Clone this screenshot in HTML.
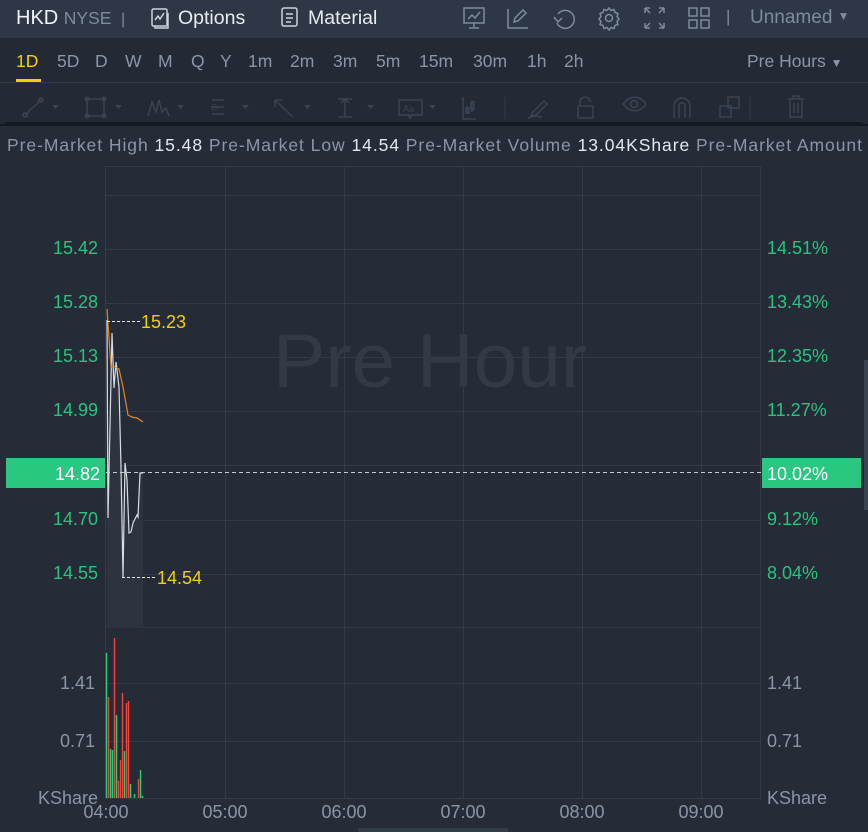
<!DOCTYPE html>
<html><head><meta charset="utf-8"><style>
*{margin:0;padding:0;box-sizing:border-box}
body{width:868px;height:832px;background:#252c37;font-family:"Liberation Sans",sans-serif;overflow:hidden;position:relative}
.top{position:absolute;left:0;top:0;width:868px;height:38px;background:#2d3746}
.bar2{position:absolute;left:0;top:38px;width:868px;height:88px;background:#232a35;border-bottom:2px solid #151a21}
.t{position:absolute;white-space:nowrap}
.tf span{position:absolute;top:51px;font-size:17.5px;color:#8a96a8}
.info{position:absolute;left:7px;top:135px;font-size:17.5px;color:#8a96a8;white-space:nowrap;letter-spacing:0.95px}
.info b{font-weight:normal;color:#e3e8ef}
.lab{position:absolute;font-size:18px;color:#27c47f}
.l{width:60px;text-align:right}
.vl{position:absolute;font-size:18px;color:#8a96a8}
.tm{width:80px;text-align:center}
</style></head><body>
<div class="top"></div>
<div class="t" style="left:16px;top:7px;font-size:20px;color:#f1f4f8">HKD <span style="font-size:17.5px;color:#7f8a9b">NYSE</span> <span style="color:#7f8a9b;font-size:16px;margin-left:4px">|</span></div>
<svg class="t" style="left:149px;top:7px" width="22" height="22" viewBox="0 0 22 22" fill="none" stroke="#cdd3dc" stroke-width="1.5"><rect x="3" y="2" width="15" height="17" rx="1.5"/><path d="M6 13l3-4 2 3 4-6"/><path d="M6 19v2h13V6"/></svg>
<div class="t" style="left:178px;top:7px;font-size:19.5px;color:#e8ecf1">Options</div>
<svg class="t" style="left:280px;top:6px" width="20" height="22" viewBox="0 0 20 22" fill="none" stroke="#cdd3dc" stroke-width="1.5"><rect x="2" y="2" width="15" height="18" rx="2"/><path d="M6 8h7M6 12h7M6 16h5"/></svg>
<div class="t" style="left:308px;top:7px;font-size:19.5px;color:#e8ecf1">Material</div>
<svg class="t" style="left:462px;top:5px" width="250" height="26" viewBox="0 0 250 26" fill="none" stroke="#7f8a9b" stroke-width="1.5">
<rect x="2" y="3" width="20" height="15"/><path d="M6 14l4-4 3 3 5-6M12 18v4M7 23h10"/>
<path d="M46 4v19h20M52 17l1-4 8-8 3 3-8 8z"/>
<path d="M96 9a9 9 0 1 1-1 9M92 12l4 5 4-4"/>
<circle cx="147" cy="13" r="3.5"/><path d="M147 3l2 2.5 3-1 1 3 3 1-1 3 2 2.5-2 2.5 1 3-3 1-1 3-3-1-2 2.5-2-2.5-3 1-1-3-3-1 1-3-2-2.5 2-2.5-1-3 3-1 1-3 3 1z"/>
<path d="M183 3h5M183 3v5M183 3l5 5M202 3h-5M202 3v5M202 3l-5 5M183 23h5M183 23v-5M183 23l5-5M202 23h-5M202 23v-5M202 23l-5-5"/>
<rect x="227" y="3" width="8" height="8"/><rect x="239" y="3" width="8" height="8"/><rect x="227" y="15" width="8" height="8"/><rect x="239" y="15" width="8" height="8"/>
</svg>
<div class="t" style="left:726px;top:7px;font-size:17px;color:#7f8a9b">|</div>
<div class="t" style="left:750px;top:7px;font-size:19px;color:#7f8a9b">Unnamed <span style="font-size:12px;position:relative;top:-3px">▼</span></div>

<div class="bar2"></div>
<div class="tf">
<span style="left:16px;color:#f4d000">1D</span><span style="left:57px">5D</span><span style="left:95px">D</span><span style="left:125px">W</span><span style="left:158px">M</span><span style="left:191px">Q</span><span style="left:220px">Y</span><span style="left:248px">1m</span><span style="left:290px">2m</span><span style="left:333px">3m</span><span style="left:376px">5m</span><span style="left:419px">15m</span><span style="left:473px">30m</span><span style="left:527px">1h</span><span style="left:564px">2h</span>
<span style="left:747px">Pre Hours <span style="position:static;font-size:12px">▼</span></span>
</div>
<div class="t" style="left:16px;top:79px;width:25px;height:3px;background:#f4d000"></div>
<div class="t" style="left:0;top:82px;width:868px;height:1px;background:#323b49"></div>
<svg class="t" style="left:0;top:84px" width="868" height="42" viewBox="0 0 868 42" fill="none" stroke="#3b4452" stroke-width="1.5">
<path d="M25 31l16-15"/><circle cx="25" cy="31" r="2"/><circle cx="41" cy="16" r="2"/>
<rect x="87" y="15" width="17" height="17"/><circle cx="87" cy="15" r="1.8"/><circle cx="104" cy="15" r="1.8"/><circle cx="87" cy="32" r="1.8"/><circle cx="104" cy="32" r="1.8"/>
<path d="M148 32l4-14 4 10 3-12 3 12 4-4 3 8"/>
<path d="M212 16h12M212 23h12M212 30h12"/><text x="211" y="26" font-size="8" fill="#3b4452" stroke="none">G</text>
<path d="M275 16l18 17M275 16v7M275 16h7"/>
<path d="M338 15h14M338 33h14M345 15v18M341 19l4-4 4 4"/>
<rect x="399" y="16" width="23" height="15"/><path d="M408 31l2 3 2-3"/><text x="403" y="28" font-size="9" fill="#3b4452" stroke="none">Aa</text>
<path d="M463 13v22h13M467 22v8M472 16v12M466 24h3v5h-3zM471 18h3v7h-3z"/>
<path d="M528 34c3 0 4-3 7-3s3 3 7 2M532 29l12-12 3 3-12 12-4 1z"/>
<rect x="578" y="22" width="15" height="12" rx="1"/><path d="M580 22v-4a5 5 0 0 1 10 0"/>
<path d="M623 20c7-9 17-9 23 0-6 9-16 9-23 0z"/><circle cx="634" cy="20" r="3.5"/>
<path d="M674 34v-12a8 8 0 0 1 16 0v12M679 34v-12a3 3 0 0 1 6 0v12"/>
<rect x="720" y="22" width="11" height="11"/><rect x="728" y="13" width="11" height="11"/>
<path d="M788 15h16M793 15v-3h6v3M790 15v18h12V15M794 19v10M798 19v10"/>
<path d="M505 13v22M750 13v22" stroke="#2e3642"/>
<g fill="#3b4452" stroke="none"><path d="M52 21h7l-3.5 4zM115 21h7l-3.5 4zM177 21h7l-3.5 4zM242 21h7l-3.5 4zM304 21h7l-3.5 4zM367 21h7l-3.5 4zM429 21h7l-3.5 4z"/></g>
</svg>
<div class="t" style="left:5px;top:122px;width:858px;height:3px;background:#151a21"></div>

<div class="info">Pre-Market High <b>15.48</b> Pre-Market Low <b>14.54</b> Pre-Market Volume <b>13.04KShare</b> Pre-Market Amount</div>

<svg class="t" style="left:0;top:0" width="868" height="832" viewBox="0 0 868 832">
<g stroke="#323b47" stroke-width="1" fill="none">
<rect x="105.5" y="166.5" width="655" height="632"/>
<path d="M225.5 166v632M344.5 166v632M463.5 166v632M582.5 166v632M701.5 166v632"/>
<path d="M106 195.5h654M106 249.5h654M106 303.5h654M106 357.5h654M106 411.5h654M106 465.5h654M106 520.5h654M106 574.5h654M106 627.5h654M106 683.5h654M106 741.5h654"/>
</g>
<text x="430" y="387" font-size="76" fill="#323a46" text-anchor="middle" font-family="Liberation Sans" textLength="314" lengthAdjust="spacingAndGlyphs">Pre Hour</text>
<path d="M107 320L108 518L112 333L114 388L116 362L119 387L121 467L123 577L125 463L127 480L129 533L131 532L133 523L137 515L138 517L140 473L143 473L143 628L107 628Z" fill="#2d3440"/>
<path d="M107 320L108 518L112 333L114 388L116 362L119 387L121 467L123 577L125 463L127 480L129 533L131 532L133 523L137 515L138 517L140 473L143 473" fill="none" stroke="#d8dde3" stroke-width="1.2"/>
<path d="M107 309L111 367L115 367L119 369L123 387L128 415L132 417L137 418L143 422" fill="none" stroke="#e3891d" stroke-width="1.2"/>
<path d="M107 321.5h34M122 577.5h34" stroke="#e8e8e8" stroke-width="1" stroke-dasharray="3,2"/>
<text x="141" y="328" font-size="18" fill="#f4d000">15.23</text>
<text x="157" y="584" font-size="18" fill="#f4d000">14.54</text>
<path d="M106 472.5h655" stroke="#c8ccd2" stroke-width="1" stroke-dasharray="4,3"/>
<rect x="6" y="458" width="99" height="30" fill="#28c880"/>
<rect x="762" y="458" width="99" height="30" fill="#28c880"/>
<text x="100" y="480" font-size="18" fill="#fff" text-anchor="end">14.82</text>
<text x="767" y="480" font-size="18" fill="#fff">10.02%</text>
<g fill="#1fd07f">
<rect x="105.8" y="653" width="1.4" height="145"/><rect x="109.8" y="749" width="1.4" height="49"/><rect x="111.8" y="750" width="1.4" height="48"/><rect x="115.8" y="715" width="1.4" height="83"/><rect x="123.8" y="751" width="1.4" height="47"/><rect x="129.8" y="784" width="1.4" height="14"/><rect x="133.8" y="794" width="1.4" height="4"/><rect x="139.8" y="770" width="1.4" height="28"/><rect x="141.8" y="796" width="1.4" height="2"/>
</g>
<g fill="#f0443c">
<rect x="107.8" y="697" width="1.4" height="101"/><rect x="113.8" y="638" width="1.4" height="160"/><rect x="117.8" y="781" width="1.4" height="17"/><rect x="119.8" y="760" width="1.4" height="38"/><rect x="121.8" y="693" width="1.4" height="105"/><rect x="125.8" y="703" width="1.4" height="95"/><rect x="127.8" y="701" width="1.4" height="97"/><rect x="137.8" y="779" width="1.4" height="19"/>
</g>
<rect x="864" y="360" width="4" height="150" fill="#3a4350"/>
<rect x="358" y="828" width="150" height="4" fill="#333c49"/>
</svg>

<div class="lab l" style="left:38px;top:238px">15.42</div>
<div class="lab l" style="left:38px;top:292px">15.28</div>
<div class="lab l" style="left:38px;top:346px">15.13</div>
<div class="lab l" style="left:38px;top:400px">14.99</div>
<div class="lab l" style="left:38px;top:509px">14.70</div>
<div class="lab l" style="left:38px;top:563px">14.55</div>
<div class="lab" style="left:767px;top:238px">14.51%</div>
<div class="lab" style="left:767px;top:292px">13.43%</div>
<div class="lab" style="left:767px;top:346px">12.35%</div>
<div class="lab" style="left:767px;top:400px">11.27%</div>
<div class="lab" style="left:767px;top:509px">9.12%</div>
<div class="lab" style="left:767px;top:563px">8.04%</div>
<div class="vl l" style="left:35px;top:673px">1.41</div>
<div class="vl l" style="left:35px;top:731px">0.71</div>
<div class="vl" style="left:38px;top:788px">KShare</div>
<div class="vl" style="left:767px;top:673px">1.41</div>
<div class="vl" style="left:767px;top:731px">0.71</div>
<div class="vl" style="left:767px;top:788px">KShare</div>
<div class="vl tm" style="left:66px;top:802px">04:00</div>
<div class="vl tm" style="left:185px;top:802px">05:00</div>
<div class="vl tm" style="left:304px;top:802px">06:00</div>
<div class="vl tm" style="left:423px;top:802px">07:00</div>
<div class="vl tm" style="left:542px;top:802px">08:00</div>
<div class="vl tm" style="left:661px;top:802px">09:00</div>
</body></html>
